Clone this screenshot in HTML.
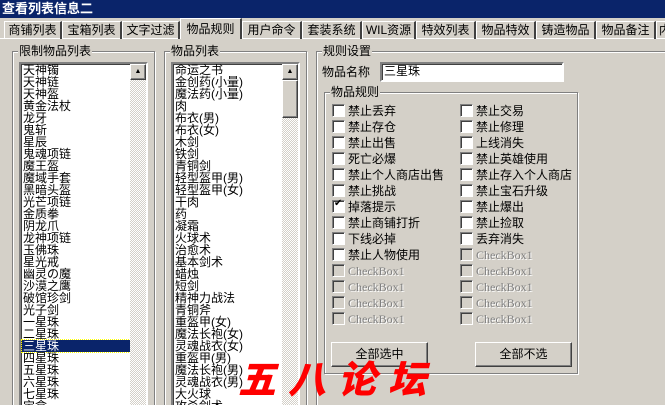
<!DOCTYPE html><html><head><meta charset="utf-8"><style>
*{margin:0;padding:0;box-sizing:border-box}
html,body{width:665px;height:405px;overflow:hidden}
body{background:#d4d0c8;font:12px "Liberation Sans","Noto Sans CJK SC",sans-serif;color:#000;position:relative}
.a{position:absolute}
.title{left:0;top:0;width:665px;height:18px;background:#0a246a;color:#fff;font-weight:bold;font-size:13px;line-height:17px;padding-left:2px}
.tab{top:21px;height:18px;line-height:17px;font-size:12px;text-align:center;border-top:1px solid #fff;border-left:1px solid #fff;border-right:2px solid #404040}
.sel{top:18px;height:21px;background:#d4d0c8;border-bottom:none}
.grp{border:1px solid #808080;box-shadow:inset 1px 1px 0 #fff,1px 1px 0 #fff}
.leg{background:#d4d0c8;padding:0 1px;line-height:14px}
.lb{background:#fff;border:2px solid;border-color:#808080 #fff #fff #808080;box-shadow:inset 1px 1px 0 #404040}
.items{left:2px;top:0;line-height:12px;font-size:12px;white-space:pre}
.sb{width:16px;background:repeating-conic-gradient(#d4d0c8 0 25%,#fff 0 50%) 0 0/2px 2px}
.btn{background:#d4d0c8;border:1px solid;border-color:#fff #404040 #404040 #fff;box-shadow:inset -1px -1px 0 #808080}
.cb{width:13px;height:13px;background:#fff;border:1px solid;border-color:#808080 #fff #fff #808080;box-shadow:inset 1px 1px 0 #404040}
.cb.d{background:#d4d0c8}
.lab{line-height:14px}
.dis{color:#808080;text-shadow:1px 1px 0 #fff;font-family:"Liberation Serif",serif}
</style></head><body>
<div class="a title">查看列表信息二</div>
<div class="a" style="left:0;top:38px;width:665px;height:1px;background:#fff"></div>
<div class="a tab" style="left:4px;width:58px">商铺列表</div>
<div class="a tab" style="left:62px;width:60px">宝箱列表</div>
<div class="a tab" style="left:122px;width:58px">文字过滤</div>
<div class="a tab sel" style="left:180px;width:62px;height:21px;line-height:20px">物品规则</div>
<div class="a tab" style="left:242px;width:60px">用户命令</div>
<div class="a tab" style="left:302px;width:60px">套装系统</div>
<div class="a tab" style="left:362px;width:54px">WIL资源</div>
<div class="a tab" style="left:416px;width:60px">特效列表</div>
<div class="a tab" style="left:476px;width:60px">物品特效</div>
<div class="a tab" style="left:536px;width:60px">铸造物品</div>
<div class="a tab" style="left:596px;width:60px">物品备注</div>
<div class="a tab" style="left:656px;width:20px;text-align:left;padding-left:2px">内</div>

<div class="a grp" style="left:12px;top:51px;width:143px;height:370px"></div>
<div class="a leg" style="left:18px;top:44px">限制物品列表</div>
<div class="a lb" style="left:19px;top:62px;width:129px;height:350px;overflow:hidden">
<div class="a items">天神镯
天神链
天神盔
黄金法杖
龙牙
鬼斩
星辰
鬼魂项链
魔王盔
魔域手套
黑暗头盔
光芒项链
金质拳
阴龙爪
龙神项链
玉佛珠
星光戒
幽灵の魔
沙漠之鹰
破馆珍剑
光子剑
一星珠
二星珠
<span style="background:#0a246a;color:#fff;display:inline-block;width:108px;outline:1px dotted #ff0;margin-left:-1px;padding-left:1px">三星珠</span>
四星珠
五星珠
六星珠
七星珠
宝盒</div>
<div class="a sb" style="left:109px;top:0;height:350px"></div>
<div class="a btn" style="left:109px;top:0;width:16px;height:16px;font-size:7px;text-align:center;line-height:14px">▲</div>
</div>

<div class="a grp" style="left:164px;top:51px;width:143px;height:370px"></div>
<div class="a leg" style="left:170px;top:44px">物品列表</div>
<div class="a lb" style="left:171px;top:62px;width:129px;height:350px;overflow:hidden">
<div class="a items">命运之书
金创药(小量)
魔法药(小量)
肉
布衣(男)
布衣(女)
木剑
铁剑
青铜剑
轻型盔甲(男)
轻型盔甲(女)
干肉
药
凝霜
火球术
治愈术
基本剑术
蜡烛
短剑
精神力战法
青铜斧
重盔甲(女)
魔法长袍(女)
灵魂战衣(女)
重盔甲(男)
魔法长袍(男)
灵魂战衣(男)
大火球
攻杀剑术</div>
<div class="a sb" style="left:109px;top:0;height:350px"></div>
<div class="a btn" style="left:109px;top:0;width:16px;height:16px;font-size:7px;text-align:center;line-height:14px">▲</div>
<div class="a btn" style="left:109px;top:16px;width:16px;height:38px"></div>
</div>

<div class="a grp" style="left:316px;top:51px;width:360px;height:370px"></div>
<div class="a leg" style="left:322px;top:44px">规则设置</div>
<div class="a" style="left:322px;top:65px;line-height:14px">物品名称</div>
<div class="a lb" style="left:380px;top:62px;width:184px;height:20px;padding-left:2px;line-height:15px">三星珠</div>
<div class="a grp" style="left:324px;top:92px;width:254px;height:282px"></div>
<div class="a leg" style="left:330px;top:85px">物品规则</div>
<div id="cbs"></div>
<div class="a btn" style="left:331px;top:342px;width:97px;height:25px;text-align:center;line-height:23px">全部选中</div>
<div class="a btn" style="left:475px;top:342px;width:97px;height:25px;text-align:center;line-height:23px">全部不选</div>

<div class="a" style="left:238px;top:355px;font:900 38px 'Noto Sans CJK SC',sans-serif;color:#f00;letter-spacing:12px;line-height:44px;font-style:italic">五八论坛</div>

<script>
var L=["禁止丢弃","禁止存仓","禁止出售","死亡必爆","禁止个人商店出售","禁止挑战","掉落提示","禁止商铺打折","下线必掉","禁止人物使用",0,0,0,0];
var R=["禁止交易","禁止修理","上线消失","禁止英雄使用","禁止存入个人商店","禁止宝石升级","禁止爆出","禁止捡取","丢弃消失",0,0,0,0,0];
var h="";
for(var i=0;i<14;i++){var y=104+i*16;
[[332,L[i]],[460,R[i]]].forEach(function(c){var t=c[1];
h+='<div class="a cb'+(t?'':' d')+'" style="left:'+c[0]+'px;top:'+y+'px">'+(t=="掉落提示"?'<span style="position:absolute;left:1px;top:-3px;font-size:10px">✔</span>':'')+'</div>';
h+='<div class="a lab'+(t?'':' dis')+'" style="left:'+(c[0]+16)+'px;top:'+y+'px">'+(t||'CheckBox1')+'</div>';});}
document.getElementById("cbs").innerHTML=h;
</script>
</body></html>
